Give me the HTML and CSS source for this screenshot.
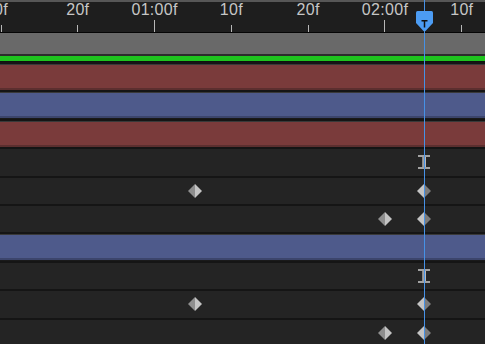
FILE: index.html
```html
<!DOCTYPE html>
<html>
    <head>
        <link rel="stylesheet" href="styles.css">
    </head>
    <body>
        <div class="timeline">
            <div class="top-strip"></div>
            <div class="ruler">
                <div class="ticks">
                    <div class="tick"><span class="label">0f</span><i class="mark"></i></div>
                    <div class="tick"><span class="label">20f</span><i class="mark"></i></div>
                    <div class="tick"><span class="label">01:00f</span><i class="mark long"></i></div>
                    <div class="tick"><span class="label">10f</span><i class="mark"></i></div>
                    <div class="tick"><span class="label">20f</span><i class="mark"></i></div>
                    <div class="tick"><span class="label">02:00f</span><i class="mark long"></i></div>
                    <div class="tick"><span class="label">10f</span><i class="mark"></i></div>
                </div>
            </div>
            <div class="work-area"></div>
            <div class="green-bar"></div>

            <div class="rows">
                <div class="row"><div class="bar red"></div></div>
                <div class="row"><div class="bar blue"></div></div>
                <div class="row"><div class="bar red"></div></div>
                <div class="row prop">
                    <svg class="ibeam k-now" width="12" height="14" viewBox="0 0 12 14">
                        <rect x="0" y="0" width="12" height="2" fill="#a2a2a2"/>
                        <rect x="0" y="12" width="12" height="2" fill="#a2a2a2"/>
                        <rect x="4" y="2" width="4" height="10" fill="#b8b8b8"/>
                        <rect x="4" y="2" width="1.5" height="10" fill="#8a8a8a"/>
                    </svg>
                </div>
                <div class="row prop">
                    <svg class="key k-a" viewBox="0 0 14 14"><polygon points="7,0 0,7 7,14" fill="#8e8e8e"/><polygon points="7,0 14,7 7,14" fill="#c4c4c4"/></svg>
                    <svg class="key k-now" viewBox="0 0 14 14"><polygon points="7,0 0,7 7,14" fill="#c4c4c4"/><polygon points="7,0 14,7 7,14" fill="#7c7c7c"/></svg>
                </div>
                <div class="row prop">
                    <svg class="key k-b" viewBox="0 0 14 14"><polygon points="7,0 0,7 7,14" fill="#8e8e8e"/><polygon points="7,0 14,7 7,14" fill="#c4c4c4"/></svg>
                    <svg class="key k-now" viewBox="0 0 14 14"><polygon points="7,0 0,7 7,14" fill="#c4c4c4"/><polygon points="7,0 14,7 7,14" fill="#7c7c7c"/></svg>
                </div>
                <div class="row"><div class="bar blue"></div></div>
                <div class="row prop">
                    <svg class="ibeam k-now" width="12" height="14" viewBox="0 0 12 14">
                        <rect x="0" y="0" width="12" height="2" fill="#a2a2a2"/>
                        <rect x="0" y="12" width="12" height="2" fill="#a2a2a2"/>
                        <rect x="4" y="2" width="4" height="10" fill="#b8b8b8"/>
                        <rect x="4" y="2" width="1.5" height="10" fill="#8a8a8a"/>
                    </svg>
                </div>
                <div class="row prop">
                    <svg class="key k-a" viewBox="0 0 14 14"><polygon points="7,0 0,7 7,14" fill="#8e8e8e"/><polygon points="7,0 14,7 7,14" fill="#c4c4c4"/></svg>
                    <svg class="key k-now" viewBox="0 0 14 14"><polygon points="7,0 0,7 7,14" fill="#c4c4c4"/><polygon points="7,0 14,7 7,14" fill="#7c7c7c"/></svg>
                </div>
                <div class="row prop">
                    <svg class="key k-b" viewBox="0 0 14 14"><polygon points="7,0 0,7 7,14" fill="#8e8e8e"/><polygon points="7,0 14,7 7,14" fill="#c4c4c4"/></svg>
                    <svg class="key k-now" viewBox="0 0 14 14"><polygon points="7,0 0,7 7,14" fill="#c4c4c4"/><polygon points="7,0 14,7 7,14" fill="#7c7c7c"/></svg>
                </div>
            </div>

            <!-- current time indicator -->
            <div class="cti-line"></div>
            <svg class="cti-head" width="17" height="20" viewBox="0 0 17 20">
                <path d="M1.5,0 H15.5 Q17,0 17,1.5 V12 L9.5,20 H7.5 L0,12 V1.5 Q0,0 1.5,0 Z" fill="#4c9cf3"/>
                <rect x="5.5" y="9" width="6" height="1.5" fill="#111"/>
                <rect x="7.75" y="9" width="1.5" height="7.5" fill="#111"/>
            </svg>
        </div>
    </body>
</html>
```

FILE: styles.css
```css
body {
    margin: 0;
    background-color: #232323;
    font-family: "Liberation Sans", Arial, sans-serif;
}

.timeline {
    position: relative;
    width: 485px;
    height: 344px;
    overflow: hidden;
}

.top-strip {
    height: 2px;
    background-color: #575757;
}

.ruler {
    height: 30px;
    background-color: #1e1e1e;
    border-bottom: 1px solid #050505;
    overflow: hidden;
}

.ticks {
    display: flex;
    margin-left: -37.4px;
    height: 100%;
}

.tick {
    flex: 0 0 76.8px;
    display: flex;
    flex-direction: column;
    align-items: center;
    justify-content: space-between;
}

.label {
    color: #c6c6c6;
    font-size: 16px;
    line-height: 16px;
    letter-spacing: 0.3px;
    white-space: nowrap;
}

.mark {
    width: 1px;
    height: 7px;
    background-color: #b8b8b8;
}

.mark.long {
    height: 12px;
}

.work-area {
    height: 21px;
    background-color: #696969;
    border-bottom: 2px solid #2c2c2c;
}

.green-bar {
    height: 5px;
    background-color: #1ec41e;
    border-bottom: 1px solid #111;
}

.row {
    position: relative;
    height: 28.4px;
    box-sizing: border-box;
    border-top: 2px solid #151515;
    background-color: #1a1a1a;
}

.row.prop {
    background-color: #242424;
}

.bar {
    height: 23px;
    margin-top: 1px;
    box-shadow: 0 -1px #393939;
}

.bar.red {
    background-color: #7a3b3b;
    border-bottom: 2px solid #5c2f2f;
}

.bar.blue {
    background-color: #4e5a8b;
    border-bottom: 2px solid #3c456c;
}

.key {
    position: absolute;
    top: 6px;
    width: 14px;
    height: 14px;
}

.ibeam {
    position: absolute;
    top: 6px;
}

.key.k-a {
    left: 188px;
}

.key.k-b {
    left: 378px;
}

.key.k-now {
    left: 417px;
}

.ibeam.k-now {
    left: 418px;
}

.cti-line {
    position: absolute;
    left: 424px;
    top: 0;
    width: 1px;
    height: 100%;
    background-color: #4691e6;
}

.cti-head {
    position: absolute;
    left: 416px;
    top: 11px;
}
```
